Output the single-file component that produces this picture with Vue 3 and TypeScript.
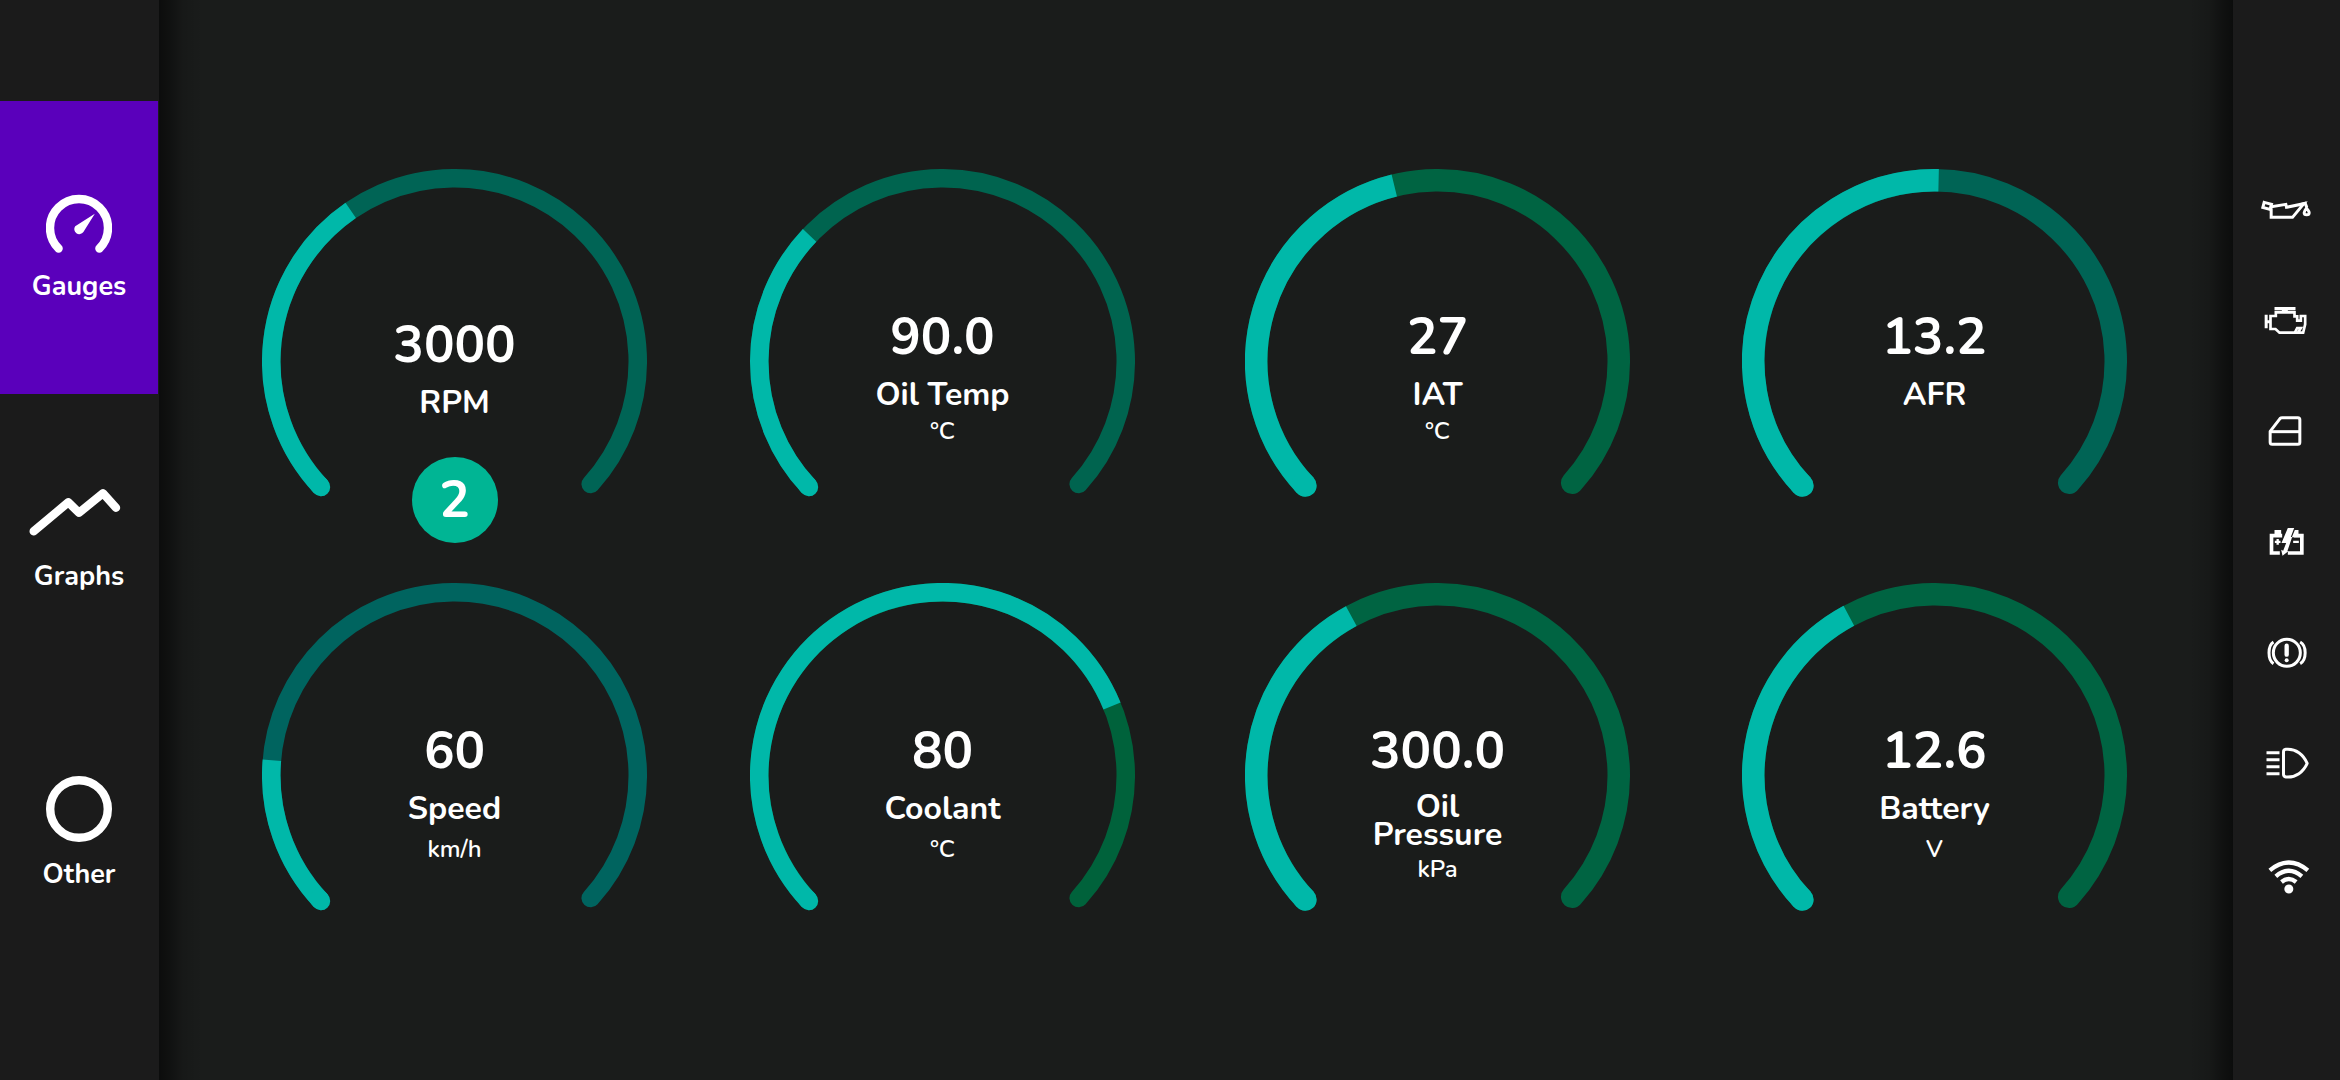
<script setup lang="ts">
import { ref } from 'vue'

type Tab = 'gauges' | 'graphs' | 'other'

interface Gauge {
  value: string
  label: string
  unit?: string
  track: string
  stroke: number
  angle: number
  gear?: string
  layout: 'tight' | 'roomy' | 'stacked'
}

const START = -133.2
const END = 132
const OUTER = 192.5

const activeTab = ref<Tab>('gauges')

const gauges: Gauge[] = [
  { value: '3000', label: 'RPM', track: '#006455', stroke: 18.5, angle: -34.5, gear: '2', layout: 'tight' },
  { value: '90.0', label: 'Oil Temp', unit: '°C', track: '#00644f', stroke: 18.5, angle: -46.5, layout: 'tight' },
  { value: '27', label: 'IAT', unit: '°C', track: '#006442', stroke: 22.5, angle: -13.8, layout: 'tight' },
  { value: '13.2', label: 'AFR', track: '#006455', stroke: 22.5, angle: 1.3, layout: 'tight' },
  { value: '60', label: 'Speed', unit: 'km/h', track: '#00645f', stroke: 18.5, angle: -85.2, layout: 'roomy' },
  { value: '80', label: 'Coolant', unit: '°C', track: '#00623b', stroke: 18.5, angle: 67.7, layout: 'roomy' },
  { value: '300.0', label: 'Oil\nPressure', unit: 'kPa', track: '#006442', stroke: 22.5, angle: -28.4, layout: 'stacked' },
  { value: '12.6', label: 'Battery', unit: 'V', track: '#006442', stroke: 22.5, angle: -28.2, layout: 'roomy' },
]

// Angles are in degrees, clockwise from the top of the dial.
function point(angle: number, radius: number): string {
  const rad = (angle * Math.PI) / 180
  const x = OUTER + radius * Math.sin(rad)
  const y = OUTER - radius * Math.cos(rad)
  return `${x.toFixed(2)} ${y.toFixed(2)}`
}

function arc(from: number, to: number, stroke: number): string {
  const r = OUTER - stroke / 2
  const large = to - from > 180 ? 1 : 0
  return `M${point(from, r)}A${r} ${r} 0 ${large} 1 ${point(to, r)}`
}
</script>

<template>
  <div class="dashboard">
    <nav class="tabs" aria-label="Views">
      <button type="button" class="tab" :class="{ active: activeTab === 'gauges' }" @click="activeTab = 'gauges'">
        <svg width="66" height="62" viewBox="-33 -36 66 62" aria-hidden="true">
          <path d="M-20.4 20.6A29 29 0 1 1 20.4 20.6" fill="none" stroke="#fff" stroke-width="8.4" stroke-linecap="round" />
          <path d="M15.8-14.2L4.4 4A5 5 0 1 1-3.8-1.8Z" fill="#fff" />
        </svg>
        <span>Gauges</span>
      </button>
      <button type="button" class="tab" :class="{ active: activeTab === 'graphs' }" @click="activeTab = 'graphs'">
        <svg width="100" height="56" viewBox="28 487 100 56" aria-hidden="true">
          <path d="M32.7 530.3L67.3 501.3L78 511.7L102 492.3L115 506.7" fill="none" stroke="#fff" stroke-width="8.4" stroke-linecap="round" stroke-linejoin="round" />
        </svg>
        <span>Graphs</span>
      </button>
      <button type="button" class="tab" :class="{ active: activeTab === 'other' }" @click="activeTab = 'other'">
        <svg width="66" height="66" viewBox="-33 -33 66 66" aria-hidden="true">
          <circle r="28.8" fill="none" stroke="#fff" stroke-width="8.4" />
        </svg>
        <span>Other</span>
      </button>
    </nav>

    <main class="panel">
      <section v-for="g in gauges" :key="g.label" class="gauge" :class="[g.layout, { geared: g.gear }]">
        <svg class="dial" viewBox="0 0 385 329" aria-hidden="true">
          <path :d="arc(START, END, g.stroke)" :stroke="g.track" :stroke-width="g.stroke" stroke-linecap="round" />
          <path :d="arc(START, g.angle, g.stroke)" stroke="#00b8a9" :stroke-width="g.stroke" />
          <path :d="arc(START, START + 1, g.stroke)" stroke="#00b8a9" :stroke-width="g.stroke" stroke-linecap="round" />
        </svg>
        <div class="readout">
          <div class="value">{{ g.value }}</div>
          <div class="label">{{ g.label }}</div>
          <div v-if="g.unit" class="unit">{{ g.unit }}</div>
        </div>
        <div v-if="g.gear" class="gear">{{ g.gear }}</div>
      </section>
    </main>

    <aside class="status" aria-label="Warning lights">
      <!-- Oil can -->
      <svg viewBox="241.5 45 156 132" aria-hidden="true">
        <g fill="none" stroke="#fff" stroke-width="9">
          <path d="M251 94L273 100L269 115L247 109Z" />
          <path d="M272 139V107L316 100L318 109L370 98L336 139Z" />
          <path d="M362 100L374 97L379 109" />
          <path d="M378 111C373 118 371 121 371 125C371 133 386 133 386 125C386 121 382 118 378 111Z" />
        </g>
      </svg>
      <!-- Engine -->
      <svg viewBox="241.5 378 156 132" aria-hidden="true">
        <g fill="none" stroke="#fff" stroke-width="8">
          <path d="M282 413H345" stroke-width="10" />
          <path d="M313 416V424" stroke-width="18" />
          <path d="M257 431V472M257 452H270" stroke-width="9" />
          <path d="M270 474V435H286V424H342V436H350V449H361V435H374V460L368 485H352L361 471H350L343 485H297L285 474Z" />
        </g>
      </svg>
      <!-- Door -->
      <svg viewBox="241.5 711 156 132" aria-hidden="true">
        <g fill="none" stroke="#fff" stroke-width="9" stroke-linejoin="round">
          <path d="M269 781L299 742Q301 740 305 740H352Q358 740 358 746V814Q358 820 352 820H275Q269 820 269 814Z" />
          <path d="M269 782H358" />
        </g>
      </svg>
      <!-- Battery -->
      <svg viewBox="241.5 54 156 132" aria-hidden="true">
        <g fill="none" stroke="#fff">
          <path d="M305 104H273V156H298M322 156H364V104H340" stroke-width="11" />
          <path d="M282 94H302" stroke-width="14" />
          <path d="M283 122.500H300M291.500 114V131M338 122.500H355" stroke-width="7" />
        </g>
        <path d="M322 81H341L331 108H335L321 149L323 151L306 164L302 146L308 149L317 126H303Z" fill="#fff" />
        <path d="M343 87H354V100H368V109H334Z" fill="#fff" />
      </svg>
      <!-- Brake -->
      <svg viewBox="241.5 387 156 132" aria-hidden="true">
        <g fill="none" stroke="#fff" stroke-width="9">
          <circle cx="319" cy="455.500" r="40.500" />
          <path d="M279 423C261 434 261 477 279 488M359 423C379 434 379 477 359 488" />
          <path d="M318.500 434V461" stroke-width="13" stroke-linecap="round" />
        </g>
        <circle cx="318.500" cy="478" r="6" fill="#fff" />
      </svg>
      <!-- Headlight -->
      <svg viewBox="241.5 720 156 132" aria-hidden="true">
        <g fill="none" stroke="#fff" stroke-width="9">
          <path d="M258 755H297M258 776H297M258 797H297M258 818H297" />
          <path d="M316 745C346 742 369 761 380 787C369 812 346 831 316 828Q309 827 309 820V753Q309 746 316 745Z" stroke-linejoin="round" />
        </g>
      </svg>
      <!-- Wi-Fi -->
      <svg viewBox="241.5 1053 156 132" aria-hidden="true">
        <g fill="none" stroke="#fff" stroke-width="13">
          <path d="M268 1108Q325 1061 382 1108" />
          <path d="M286 1126Q325 1093 364 1126" />
          <path d="M303 1143Q325 1125 347 1143" />
        </g>
        <circle cx="325" cy="1164" r="13.500" fill="#fff" />
      </svg>
    </aside>
  </div>
</template>

<style>
body {
  margin: 0;
  background: #1a1c1b;
}
</style>

<style scoped>
.dashboard {
  display: grid;
  grid-template-columns: 159px 1fr 107px;
  min-height: 100vh;
  color: #fff;
  background: #1a1c1b;
  font-family: "Nunito", "Noto Sans", sans-serif;
  font-weight: 700;
}

.tabs {
  display: flex;
  flex-direction: column;
  justify-content: center;
  padding-right: 1px;
  background: #1b1b1b;
}

.tab {
  display: flex;
  flex-direction: column;
  align-items: center;
  justify-content: center;
  gap: 17px;
  height: 293px;
  padding: 0;
  border: 0;
  background: none;
  color: inherit;
  font-family: inherit;
  font-size: 27px;
  font-weight: inherit;
  line-height: 32px;
  cursor: pointer;
}

.tab.active {
  background: #5a00bb;
}

.panel {
  display: grid;
  grid-template-columns: 488fr 495fr 497fr 385fr;
  align-content: center;
  row-gap: 85px;
  padding: 0 106px 0 103px;
  background:
    linear-gradient(to right, rgb(0 0 0 / 55%), rgb(0 0 0 / 40%) 10px, rgb(0 0 0 / 12%) 24px, transparent 44px),
    linear-gradient(to left, rgb(0 0 0 / 55%), rgb(0 0 0 / 40%) 10px, rgb(0 0 0 / 12%) 24px, transparent 44px);
}

.gauge {
  position: relative;
  display: grid;
  width: 385px;
}

.dial,
.readout {
  grid-area: 1 / 1;
}

.dial {
  display: block;
  width: 100%;
  fill: none;
}

.readout {
  padding-top: 140px;
  text-align: center;
}

.geared .readout {
  padding-top: 148px;
}

.value {
  margin-bottom: 16px;
  font-size: 51px;
  line-height: 56px;
}

.label {
  font-size: 32px;
  line-height: 28px;
  white-space: pre-line;
}

.unit {
  margin-top: 10px;
  font-size: 24px;
  font-weight: 600;
  line-height: 24px;
}

.roomy .unit {
  margin-top: 14px;
}

.stacked .value {
  margin-bottom: 14px;
}

.stacked .unit {
  margin-top: 8px;
}

.gear {
  position: absolute;
  top: 288px;
  left: 50%;
  width: 86px;
  transform: translateX(-50%);
  border-radius: 50%;
  background: #00b594;
  font-size: 51px;
  line-height: 86px;
  text-align: center;
}

.status {
  display: flex;
  flex-direction: column;
  align-items: center;
  justify-content: center;
  gap: 67px;
  padding-top: 2px;
  background: #1b1b1b;
}

.status svg {
  width: 52px;
  height: 44px;
}
</style>
